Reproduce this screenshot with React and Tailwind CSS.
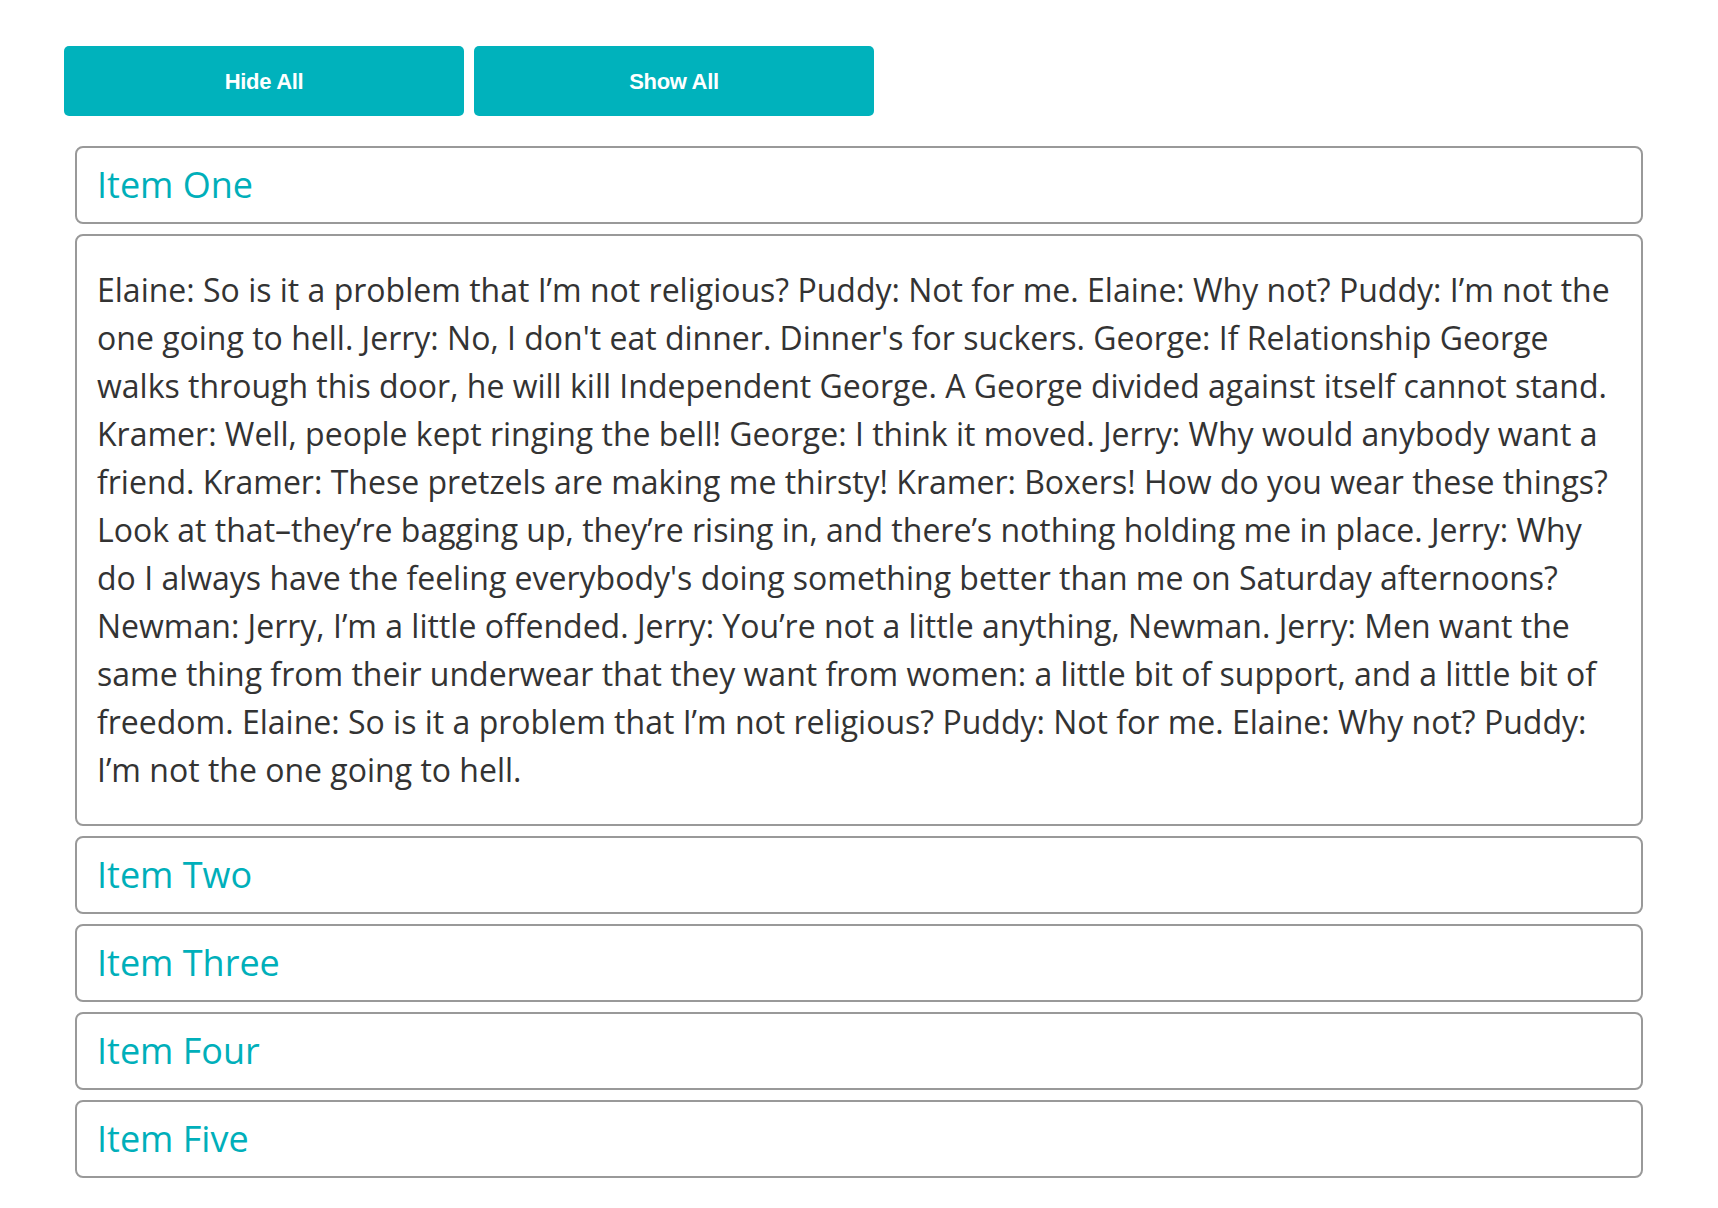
import React from "react";

const text =
  "Elaine: So is it a problem that I\u2019m not religious? Puddy: Not for me. Elaine: Why not? Puddy: I\u2019m not the one going to hell. Jerry: No, I don't eat dinner. Dinner's for suckers. George: If Relationship George walks through this door, he will kill Independent George. A George divided against itself cannot stand. Kramer: Well, people kept ringing the bell! George: I think it moved. Jerry: Why would anybody want a friend. Kramer: These pretzels are making me thirsty! Kramer: Boxers! How do you wear these things? Look at that\u2013they\u2019re bagging up, they\u2019re rising in, and there\u2019s nothing holding me in place. Jerry: Why do I always have the feeling everybody's doing something better than me on Saturday afternoons? Newman: Jerry, I\u2019m a little offended. Jerry: You\u2019re not a little anything, Newman. Jerry: Men want the same thing from their underwear that they want from women: a little bit of support, and a little bit of freedom. Elaine: So is it a problem that I\u2019m not religious? Puddy: Not for me. Elaine: Why not? Puddy: I\u2019m not the one going to hell.";

function Title({ children }) {
  return (
    <div className="mx-[11px] h-[78px] border-2 border-[#999999] rounded-[8px] flex items-center px-[20px]">
      <span className="text-[36px] leading-none text-[#00afba] font-['Open_Sans',sans-serif]">
        {children}
      </span>
    </div>
  );
}

export default function App() {
  return (
    <div className="min-h-[1208px] bg-white px-[64px] pt-[46px] font-['Open_Sans',sans-serif]">
      <div className="flex gap-[10px]">
        <button className="w-[400px] h-[70px] rounded-[5px] bg-[#00b2bc] text-white text-[22px] font-bold tracking-[-0.3px] font-['Liberation_Sans',Arial,sans-serif]">
          Hide All
        </button>
        <button className="w-[400px] h-[70px] rounded-[5px] bg-[#00b2bc] text-white text-[22px] font-bold tracking-[-0.3px] font-['Liberation_Sans',Arial,sans-serif]">
          Show All
        </button>
      </div>
      <div className="mt-[30px] flex flex-col gap-[10px]">
        <Title>Item One</Title>
        <div className="mx-[11px] border-2 border-[#999999] rounded-[8px] px-[20px] py-[30px]">
          <p className="text-[32px] leading-[48px] text-[#333333]">{text}</p>
        </div>
        <Title>Item Two</Title>
        <Title>Item Three</Title>
        <Title>Item Four</Title>
        <Title>Item Five</Title>
      </div>
    </div>
  );
}
